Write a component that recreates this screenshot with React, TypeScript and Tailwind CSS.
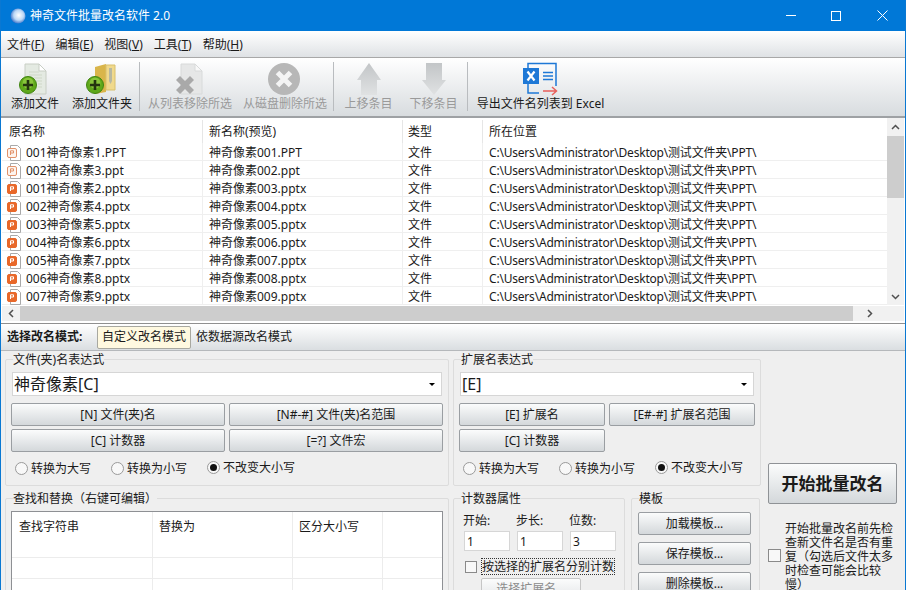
import React from 'react';

const rows = [
  ['001神奇像素1.PPT', '神奇像素001.PPT', false],
  ['002神奇像素3.ppt', '神奇像素002.ppt', false],
  ['001神奇像素2.pptx', '神奇像素003.pptx', true],
  ['002神奇像素4.pptx', '神奇像素004.pptx', true],
  ['003神奇像素5.pptx', '神奇像素005.pptx', true],
  ['004神奇像素6.pptx', '神奇像素006.pptx', true],
  ['005神奇像素7.pptx', '神奇像素007.pptx', true],
  ['006神奇像素8.pptx', '神奇像素008.pptx', true],
  ['007神奇像素9.pptx', '神奇像素009.pptx', true],
] as const;

const PageIcon = ({ dim = false }: { dim?: boolean }) => (
  <path d="M5 2h14l7 7v23H5z" fill={dim ? '#e6e7e7' : '#e4eae2'} stroke={dim ? '#d8dada' : '#c8cec4'} />
);

const PlusBadge = () => (
  <g>
    <circle cx="10" cy="23" r="8.500" fill="#5fa81a" stroke="#3f8410" />
    <circle cx="10" cy="21" r="5.500" fill="#9ad24a" opacity="0.7" />
    <path d="M10 18v10M5 23h10" stroke="#24350f" strokeWidth="2.600" />
  </g>
);

const AddFileIcon = () => (
  <svg width="34" height="34" viewBox="0 0 34 34">
    <g transform="translate(2 0)">
      <PageIcon />
      <path d="M19 2v7h7z" fill="#fff" stroke="#c8cec4" />
      <path d="M9 10h10M9 13h13M9 16h13M16 19h6M18 22h4M18 25h4" stroke="#cfd8c8" />
    </g>
    <PlusBadge />
  </svg>
);

const AddFolderIcon = () => (
  <svg width="34" height="34" viewBox="0 0 34 34">
    <path d="M10 5l11-3v28l-11 2z" fill="#d9b54a" />
    <path d="M21 3h9v25h-9z" fill="#f0d98c" stroke="#d9c06c" />
    <path d="M24 6h3v13l-1.500 3-1.500-3z" fill="#b8b8a0" />
    <PlusBadge />
  </svg>
);

const RemoveFileIcon = () => (
  <svg width="34" height="34" viewBox="0 0 34 34">
    <g transform="translate(3 0)">
      <PageIcon dim />
      <path d="M19 2v7h7z" fill="#f8f8f8" stroke="#d8dada" />
    </g>
    <path d="M7 14l5 5 5-5 4 4-5 5 5 5-4 4-5-5-5 5-4-4 5-5-5-5z" fill="#a9a9a9" />
  </svg>
);

const DeleteIcon = () => (
  <svg width="34" height="34" viewBox="0 0 34 34">
    <circle cx="16" cy="17" r="16" fill="#b7b7b7" />
    <path d="M9.500 10.500l13 13M22.500 10.500l-13 13" stroke="#f4f4f4" strokeWidth="5" />
  </svg>
);

const UpIcon = () => (
  <svg width="26" height="34" viewBox="0 0 26 34">
    <defs>
      <linearGradient id="upg" x1="0" y1="0" x2="0" y2="1">
        <stop offset="0" stopColor="#c2c5c7" />
        <stop offset="1" stopColor="#e0e2e3" />
      </linearGradient>
    </defs>
    <path d="M13 1l12 17h-4v15H5V18H1z" fill="url(#upg)" />
  </svg>
);

const DownIcon = () => (
  <svg width="26" height="34" viewBox="0 0 26 34">
    <defs>
      <linearGradient id="downg" x1="0" y1="0" x2="0" y2="1">
        <stop offset="0" stopColor="#c2c5c7" />
        <stop offset="1" stopColor="#e0e2e3" />
      </linearGradient>
    </defs>
    <path d="M13 33L1 18h4V1h16v17h4z" fill="url(#downg)" />
  </svg>
);

const ExcelIcon = () => (
  <svg width="36" height="34" viewBox="0 0 36 34">
    <path d="M5 6V1.500h28V24M5 22v9h11" fill="none" stroke="#1e78d6" strokeWidth="1.500" />
    <rect x="0" y="6" width="16" height="16" fill="#1e78d6" />
    <path d="M4.500 9.500l7 9M11.500 9.500l-7 9" stroke="#fff" strokeWidth="2.200" />
    <path d="M20 10.500h10M20 14h10M20 17.500h10" stroke="#1e78d6" strokeWidth="1.500" />
    <path d="M20 29h13M29 25l4.500 4-4.500 4" fill="none" stroke="#e8605c" strokeWidth="1.500" />
  </svg>
);

const PptIcon = ({ filled }: { filled: boolean }) => (
  <svg width="14" height="16" viewBox="0 0 14 16" className="shrink-0">
    <path d="M3.500 0.500h7l3 3v12h-10z" fill="#fff" stroke="#a9a9a9" />
    <rect x="0.500" y="3.500" width="9" height="9" rx="1.500" fill={filled ? '#e8682a' : '#fdf4ee'} stroke={filled ? '#e8682a' : '#e2926a'} />
    <path d="M3.500 10V5.800h3v2.200h-3" fill="none" stroke={filled ? '#fff' : '#e2926a'} />
  </svg>
);

const ToolButton = ({ icon, label, disabled, width }: { icon: React.ReactNode; label: string; disabled?: boolean; width: string }) => (
  <div className={`flex h-full flex-col items-center justify-end ${width}`}>
    <div className="flex h-[34px] items-center justify-center">{icon}</div>
    <span className={`whitespace-nowrap leading-[16px] ${disabled ? 'text-[#9a9a9a]' : 'text-[#1a1a1a]'}`}>{label}</span>
  </div>
);

const ToolSep = () => <div className="mb-[1px] mr-[3px] h-[49px] w-px shrink-0 bg-[#b9bcbf]" />;

const HeadCell = ({ label, width, pad = 'pl-[6px]' }: { label: string; width: string; pad?: string }) => (
  <div className={`flex h-full items-center border-r border-[#e6e6e6] ${width} ${pad}`}>{label}</div>
);

const FormButton = ({ label, width }: { label: string; width: string }) => (
  <button className={`h-[23px] whitespace-nowrap rounded-[2px] border border-[#9a9ea2] bg-gradient-to-b from-[#fbfcfc] to-[#d4d8db] text-[12px] leading-none text-[#1a1a1a] ${width}`}>
    {label}
  </button>
);

const Radio = ({ label, checked }: { label: string; checked?: boolean }) => (
  <label className="flex items-center gap-[3px]">
    <span className="flex h-[13px] w-[13px] items-center justify-center rounded-full border border-[#9a9a9a] bg-[#f8f8f8]">
      {checked && <span className="h-[7px] w-[7px] rounded-full bg-[#111]" />}
    </span>
    <span className="pt-[2px]">{label}</span>
  </label>
);

const Radios = () => (
  <div className="mt-[6px] flex h-[18px] pl-[4px]">
    <div className="w-[96px]"><Radio label="转换为大写" /></div>
    <div className="w-[96px]"><Radio label="转换为小写" /></div>
    <Radio label="不改变大小写" checked />
  </div>
);

const Combo = ({ value, width }: { value: string; width: string }) => (
  <div className={`ml-px mt-[5px] flex h-[24px] items-center justify-between border border-[#d6d6d6] bg-white pl-[1px] pr-[6px] text-[16px] ${width}`}>
    <span>{value}</span>
    <span className="h-0 w-0 border-x-[3px] border-t-[3px] border-x-transparent border-t-black" />
  </div>
);

const Group = ({ title, className, children }: { title: string; className: string; children: React.ReactNode }) => (
  <fieldset className={`rounded-[2px] border border-[#dcdcdc] px-[5px] ${className}`}>
    <legend className="ml-[2px] pt-[2px] text-[12px] leading-[14px]">{title}</legend>
    {children}
  </fieldset>
);

const NumInput = ({ value }: { value: string }) => (
  <div className="flex h-[20px] w-[46px] items-center border border-[#d6d6d6] bg-white pl-[2px] pt-px">{value}</div>
);

export default function App() {
  return (
    <div className="flex h-[590px] w-[906px] flex-col overflow-hidden border-x border-[#0a78d2] bg-[#efefef] text-[12px] text-[#1a1a1a] [font-family:'Noto_Sans','Noto_Sans_CJK_SC',sans-serif]">
      {/* title bar */}
      <div className="flex h-[31px] shrink-0 items-center bg-[#0078d7] text-white">
        <svg width="16" height="16" viewBox="0 0 16 16" className="ml-[9px]">
          <defs>
            <radialGradient id="ball" cx="0.55" cy="0.45" r="0.6">
              <stop offset="0" stopColor="#ffffff" />
              <stop offset="0.55" stopColor="#bcd8f6" />
              <stop offset="1" stopColor="#2a66c4" />
            </radialGradient>
          </defs>
          <circle cx="8" cy="8" r="7.500" fill="url(#ball)" />
        </svg>
        <span className="ml-[4px]">神奇文件批量改名软件 2.0</span>
        <div className="ml-auto flex items-center pr-[17px]">
          <span className="h-px w-[10px] bg-white" />
          <span className="ml-[35px] h-[10px] w-[10px] border border-white" />
          <svg width="11" height="11" viewBox="0 0 11 11" className="ml-[36px]">
            <path d="M0.500 0.500l10 10M10.500 0.500l-10 10" stroke="#fff" />
          </svg>
        </div>
      </div>

      {/* menu */}
      <div className="flex h-[27px] shrink-0 items-center gap-[11px] border-b border-[#a8a8a8] bg-gradient-to-b from-white to-[#dfe2e5] pl-[6px] pt-[2px]">
        <span>文件(<u>F</u>)</span>
        <span>编辑(<u>E</u>)</span>
        <span>视图(<u>V</u>)</span>
        <span>工具(<u>T</u>)</span>
        <span>帮助(<u>H</u>)</span>
      </div>

      {/* toolbar */}
      <div className="flex h-[60px] shrink-0 items-end border-b-2 border-[#9ea1a4] bg-gradient-to-b from-white to-[#d8dcdf] pb-[4px]">
        <ToolButton width="ml-[4px] w-[60px]" icon={<AddFileIcon />} label="添加文件" />
        <ToolButton width="w-[74px]" icon={<AddFolderIcon />} label="添加文件夹" />
        <ToolSep />
        <ToolButton width="w-[94px]" icon={<RemoveFileIcon />} label="从列表移除所选" disabled />
        <ToolButton width="w-[96px]" icon={<DeleteIcon />} label="从磁盘删除所选" disabled />
        <ToolSep />
        <ToolButton width="w-[63px]" icon={<UpIcon />} label="上移条目" disabled />
        <ToolButton width="w-[67px]" icon={<DownIcon />} label="下移条目" disabled />
        <ToolSep />
        <ToolButton width="w-[139px]" icon={<ExcelIcon />} label="导出文件名列表到 Excel" />
      </div>

      {/* file list */}
      <div className="flex h-[206px] shrink-0 flex-col border-b border-[#8f8f8f] bg-white pl-[1px] pr-px">
        <div className="flex h-[187px] shrink-0">
          <div className="min-w-0 flex-1 overflow-hidden">
            <div className="flex h-[25px] items-center pt-[2px]">
              <HeadCell label="原名称" width="w-[201px]" pad="pl-[7px]" />
              <HeadCell label="新名称(预览)" width="w-[200px]" />
              <HeadCell label="类型" width="w-[80px]" pad="pl-[5px]" />
              <div className="pl-[6px]">所在位置</div>
            </div>
            {rows.map(([name, next, filled]) => (
              <div key={name} className="flex h-[18px] items-center whitespace-nowrap border-b border-[#efefef]">
                <div className="flex h-full w-[201px] items-center gap-[5px] border-r border-[#efefef] pl-[5px] pt-[2px]">
                  <PptIcon filled={filled} />
                  <span>{name}</span>
                </div>
                <div className="flex h-full w-[200px] items-center border-r border-[#efefef] pl-[6px] pt-[2px]">{next}</div>
                <div className="flex h-full w-[80px] items-center border-r border-[#efefef] pl-[5px] pt-[2px]">文件</div>
                <div className="flex h-full items-center pl-[6px] pt-[2px] tracking-[-0.2px]">{'C:\\Users\\Administrator\\Desktop\\测试文件夹\\PPT\\'}</div>
              </div>
            ))}
          </div>
          {/* vertical scrollbar */}
          <div className="flex w-[17px] shrink-0 flex-col bg-[#f1f1f1]">
            <div className="flex h-[18px] items-center justify-center">
              <svg width="9" height="6" viewBox="0 0 9 6"><path d="M1 5l3.500-3.500L8 5" fill="none" stroke="#505050" strokeWidth="1.500" /></svg>
            </div>
            <div className="h-[62px] bg-[#cdcdcd]" />
            <div className="flex-1" />
            <div className="flex h-[17px] items-center justify-center">
              <svg width="9" height="6" viewBox="0 0 9 6"><path d="M1 1l3.500 3.500L8 1" fill="none" stroke="#505050" strokeWidth="1.500" /></svg>
            </div>
          </div>
        </div>
        {/* horizontal scrollbar */}
        <div className="mt-px flex h-[15px] shrink-0 items-center bg-[#f1f1f1]">
          <div className="flex h-full w-[18px] items-center justify-center">
            <svg width="6" height="9" viewBox="0 0 6 9"><path d="M5 1L1.500 4.500 5 8" fill="none" stroke="#505050" strokeWidth="1.500" /></svg>
          </div>
          <div className="h-full w-[833px] bg-[#cdcdcd]" />
          <div className="flex h-full flex-1 items-center justify-center pr-[17px]">
            <svg width="6" height="9" viewBox="0 0 6 9"><path d="M1 1l3.500 3.500L1 8" fill="none" stroke="#505050" strokeWidth="1.500" /></svg>
          </div>
        </div>
      </div>

      {/* rename mode */}
      <div className="flex h-[27px] shrink-0 items-center border-b border-[#b5b8bb] bg-gradient-to-b from-white to-[#dadee1] pl-[6px]">
        <span className="w-[90px] font-bold">选择改名模式:</span>
        <span className="flex h-[23px] w-[94px] items-center justify-center rounded-[2px] border border-[#a8a8a0] bg-[#fff9e0]">自定义改名模式</span>
        <span className="ml-[5px]">依数据源改名模式</span>
      </div>

      {/* form area */}
      <div className="flex min-h-0 flex-1 pl-[4px]">
        <div className="flex w-[756px] shrink-0 flex-col">
          <div className="flex gap-[4px]">
            <Group title="文件(夹)名表达式" className="h-[135px] w-[444px]">
              <Combo value="神奇像素[C]" width="w-[430px]" />
              <div className="mt-[7px] flex gap-[4px]">
                <FormButton label="[N] 文件(夹)名" width="w-[214px]" />
                <FormButton label="[N#-#] 文件(夹)名范围" width="w-[214px]" />
              </div>
              <div className="mt-[3px] flex gap-[4px]">
                <FormButton label="[C] 计数器" width="w-[214px]" />
                <FormButton label="[=?] 文件宏" width="w-[214px]" />
              </div>
              <Radios />
            </Group>
            <Group title="扩展名表达式" className="h-[135px] w-[308px]">
              <Combo value="[E]" width="w-[294px]" />
              <div className="mt-[7px] flex gap-[4px]">
                <FormButton label="[E] 扩展名" width="w-[146px]" />
                <FormButton label="[E#-#] 扩展名范围" width="w-[146px]" />
              </div>
              <div className="mt-[3px] flex gap-[4px]">
                <FormButton label="[C] 计数器" width="w-[146px]" />
              </div>
              <Radios />
            </Group>
          </div>
          <div className="mt-[4px] flex">
            <Group title="查找和替换（右键可编辑）" className="h-[120px] w-[444px]">
              <div className="mt-[5px] h-[100px] w-[432px] overflow-hidden border border-[#8e9094] bg-white">
                <div className="flex h-[25px]">
                  <div className="flex w-[141px] items-center border-r border-[#ececec] pl-[7px] pt-[4px]">查找字符串</div>
                  <div className="flex w-[140px] items-center border-r border-[#ececec] pl-[6px] pt-[4px]">替换为</div>
                  <div className="flex w-[90px] items-center border-r border-[#ececec] pl-[6px] pt-[4px]">区分大小写</div>
                </div>
                {[0, 1, 2].map((i) => (
                  <div key={i} className="flex h-[21px] border-b border-[#ececec]">
                    <div className="w-[141px] border-r border-[#ececec]" />
                    <div className="w-[140px] border-r border-[#ececec]" />
                    <div className="w-[90px] border-r border-[#ececec]" />
                  </div>
                ))}
              </div>
            </Group>
            <Group title="计数器属性" className="ml-[4px] h-[120px] w-[172px]">
              <div className="mt-[6px] flex gap-[7px] pl-[5px]">
                {[['开始:', '1'], ['步长:', '1'], ['位数:', '3']].map(([label, value]) => (
                  <div key={label} className="w-[46px]">
                    <div className="-ml-px h-[16px] pt-px leading-[16px]">{label}</div>
                    <div className="mt-[3px]"><NumInput value={value} /></div>
                  </div>
                ))}
              </div>
              <div className="mt-[7px] flex items-center gap-[4px] pl-[6px]">
                <span className="h-[12px] w-[12px] shrink-0 border border-[#8a8a8a] bg-[#f8f8f8]" />
                <span className="whitespace-nowrap border border-dotted border-[#333] leading-[15px]">按选择的扩展名分别计数</span>
              </div>
              <div className="ml-[22px] mt-[3px] flex h-[22px] w-[100px] items-center justify-center rounded-[2px] border border-[#c6c6c6] bg-gradient-to-b from-[#fbfcfc] to-[#e4e6e8] text-[#8c8c8c]">选择扩展名...</div>
            </Group>
            <Group title="模板" className="ml-[6px] h-[120px] w-[129px]">
              <div className="ml-px mt-[6px] flex flex-col gap-[7px]">
                <FormButton label="加载模板..." width="w-[113px]" />
                <FormButton label="保存模板..." width="w-[113px]" />
                <FormButton label="删除模板..." width="w-[113px]" />
              </div>
            </Group>
          </div>
        </div>

        {/* start + duplicate check */}
        <div className="ml-[7px] flex w-[130px] shrink-0 flex-col pt-[112px]">
          <button className="h-[41px] w-[129px] shrink-0 rounded-[2px] border border-[#8f9296] bg-gradient-to-b from-[#fbfcfc] to-[#d4d8db] text-[17px] font-bold">开始批量改名</button>
          <div className="mt-[18px] flex items-start gap-[4px]">
            <span className="mt-[27px] h-[13px] w-[13px] shrink-0 border border-[#8a8a8a] bg-[#f8f8f8]" />
            <p className="w-[110px] leading-[14px]">开始批量改名前先检查新文件名是否有重复（勾选后文件太多时检查可能会比较慢）</p>
          </div>
        </div>
      </div>
    </div>
  );
}
